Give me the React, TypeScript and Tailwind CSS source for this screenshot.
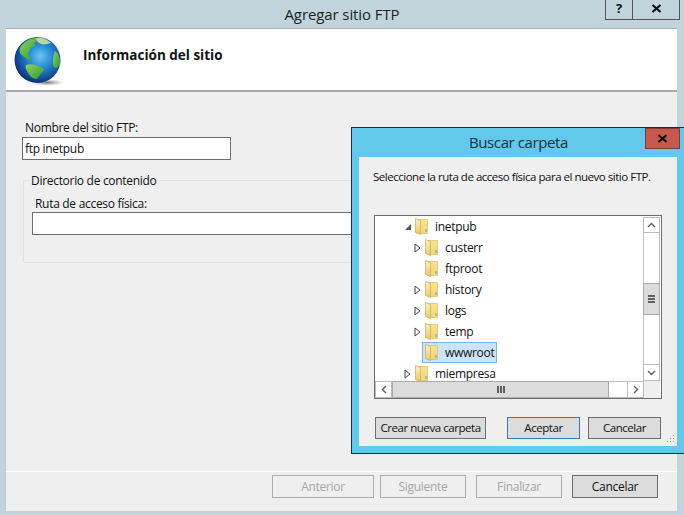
import React from 'react'

const font = "[font-family:'Open_Sans','Noto_Sans',sans-serif]"

function Globe() {
  return (
    <svg width="50" height="52" viewBox="0 0 50 52" className="shrink-0">
      <defs>
        <radialGradient id="sea" cx="0.56" cy="0.42" r="0.6">
          <stop offset="0" stopColor="#6cc8f0" />
          <stop offset="0.4" stopColor="#2a8ed6" />
          <stop offset="0.78" stopColor="#15529f" />
          <stop offset="1" stopColor="#0e2c6c" />
        </radialGradient>
        <radialGradient id="shade" cx="0.5" cy="0.5" r="0.5">
          <stop offset="0" stopColor="#444" stopOpacity="0.75" />
          <stop offset="1" stopColor="#888" stopOpacity="0" />
        </radialGradient>
        <linearGradient id="land" x1="0" y1="0" x2="1" y2="1">
          <stop offset="0" stopColor="#8fd060" />
          <stop offset="1" stopColor="#2f9a36" />
        </linearGradient>
      </defs>
      <ellipse cx="33" cy="46.5" rx="17" ry="3.5" fill="url(#shade)" />
      <circle cx="23.5" cy="24" r="23" fill="url(#sea)" />
      <path d="M7 10 C11 5 17 2 22 2 C25 4 23 6 20 7 C22 9 20 11 18 11 C15 12 17 15 14 17 C13 20 17 21 18 25 C14 24 10 21 8 19 C5 17 5 13 7 10Z" fill="url(#land)" />
      <path d="M22 2 C28 1 33 3 37 7 C33 8 30 9 27 8 C25 7 22 5 22 2Z" fill="#b5d8a0" />
      <path d="M12 29 C17 27 24 29 30 33 C29 37 25 39 23 43 C18 43 15 39 13 35 C12 33 11 31 12 29Z" fill="url(#land)" />
      <path d="M41 15 C45 18 47 23 46 29 C44 31 42 33 40 31 C38 27 39 20 41 15Z" fill="url(#land)" />
    </svg>
  )
}

function Folder() {
  return (
    <svg width="13" height="17" viewBox="0 0 13 17" className="shrink-0">
      <defs>
        <linearGradient id="leaf" x1="0" y1="0" x2="0" y2="1">
          <stop offset="0" stopColor="#fcf2c4" />
          <stop offset="1" stopColor="#e9c766" />
        </linearGradient>
        <linearGradient id="panel" x1="0" y1="0" x2="0" y2="1">
          <stop offset="0" stopColor="#f8e390" />
          <stop offset="1" stopColor="#f2d578" />
        </linearGradient>
      </defs>
      <path d="M3 1.5 H12.5 V15.5 H3Z" fill="url(#panel)" stroke="#d8bb66" strokeWidth="0.7" />
      <path d="M0.5 0.5 L5.5 2.5 L5.5 16.5 L0.5 14.5Z" fill="url(#leaf)" stroke="#c9a850" strokeWidth="0.7" />
      <rect x="10.5" y="11" width="1" height="3" fill="#4aa3df" />
    </svg>
  )
}

function TreeRow({ label, indent, arrow, selected }: { label: string; indent: string; arrow?: 'open' | 'closed'; selected?: boolean }) {
  return (
    <div className={`flex h-[21px] items-center ${indent}`}>
      <div className="flex w-[8px] justify-start">
        {arrow === 'open' && (
          <svg width="8" height="8" viewBox="0 0 8 8" className="shrink-0"><path d="M7 1 L7 7 L1 7Z" fill="#555" /></svg>
        )}
        {arrow === 'closed' && (
          <svg width="7" height="10" viewBox="0 0 7 10" className="shrink-0"><path d="M1 1 L6 5 L1 9Z" fill="#fff" stroke="#444" /></svg>
        )}
      </div>
      <div className={`flex h-[21px] items-center gap-[7px] border pr-[2px] pl-[2px] ${selected ? 'border-[#7db4e4] bg-[#cce4f8]' : 'border-transparent'}`}>
        <Folder />
        <span className="text-[12px] text-[#111]">{label}</span>
      </div>
    </div>
  )
}

function DlgButton({ children, className }: { children: React.ReactNode; className: string }) {
  return (
    <div className={`flex h-[22px] items-center justify-center whitespace-nowrap border bg-[#dcdcdc] text-[11.5px] tracking-[-0.45px] text-[#111] ${className}`}>
      {children}
    </div>
  )
}

function WizardButton({ children, className }: { children: React.ReactNode; className: string }) {
  return (
    <div className={`flex h-[23px] items-center justify-center border text-[12px] ${className}`}>
      {children}
    </div>
  )
}

function BrowseDialog() {
  return (
    <div className="absolute left-[351px] top-[127px] flex h-[327px] w-[340px] flex-col border border-[#1e2c38] bg-[#63c8eb]">
      <div className="relative h-[29px] w-[333px] shrink-0">
        <div className="flex h-[29px] items-center justify-center text-[15px] tracking-[-0.4px] text-[#14313f]">Buscar carpeta</div>
        <div className="absolute left-[293px] top-0 flex h-[21px] w-[35px] items-center justify-center border border-[#7c3a38] bg-[#c75a50]">
          <svg width="11" height="9" viewBox="0 0 11 9"><path d="M1.5 1 L9.5 8 M9.5 1 L1.5 8" stroke="#111" strokeWidth="2.2" /></svg>
        </div>
      </div>
      <div className="relative ml-[7px] flex h-[289px] w-[318px] flex-col bg-[#efefef] pl-[15px]">
        <p className="-ml-px mt-[11px] h-[17px] whitespace-nowrap text-[11.5px] leading-[17px] tracking-[-0.48px] text-[#111]">Seleccione la ruta de acceso física para el nuevo sitio FTP.</p>
        <div className="mt-[30px] flex h-[184px] w-[288px] flex-col border border-[#6e6e6e] bg-white">
          <div className="flex min-h-0 flex-1">
            <div className="flex-1 overflow-hidden">
              <TreeRow label="inetpub" indent="pl-[29px]" arrow="open" />
              <TreeRow label="custerr" indent="pl-[39px]" arrow="closed" />
              <TreeRow label="ftproot" indent="pl-[39px]" />
              <TreeRow label="history" indent="pl-[39px]" arrow="closed" />
              <TreeRow label="logs" indent="pl-[39px]" arrow="closed" />
              <TreeRow label="temp" indent="pl-[39px]" arrow="closed" />
              <TreeRow label="wwwroot" indent="pl-[39px]" selected />
              <TreeRow label="miempresa" indent="pl-[29px]" arrow="closed" />
            </div>
            <div className="flex w-[18px] flex-col pt-[1px] pr-[1px]">
              <div className="flex h-[16px] items-center justify-center border border-[#bcbcbc] bg-white">
                <svg width="9" height="6" viewBox="0 0 9 6"><path d="M1 5 L4.5 1.5 L8 5" fill="none" stroke="#606060" strokeWidth="1.4" /></svg>
              </div>
              <div className="h-[50px] border-x border-[#bcbcbc]" />
              <div className="flex h-[32px] flex-col items-center justify-center gap-[1px] border border-[#ababab] bg-[#dcdcdc]">
                <div className="h-[2px] w-[7px] bg-[#606060]" />
                <div className="h-[2px] w-[7px] bg-[#606060]" />
                <div className="h-[2px] w-[7px] bg-[#606060]" />
              </div>
              <div className="flex-1 border-x border-[#bcbcbc]" />
              <div className="flex h-[17px] items-center justify-center border border-[#bcbcbc] bg-white">
                <svg width="9" height="6" viewBox="0 0 9 6"><path d="M1 1 L4.5 4.5 L8 1" fill="none" stroke="#606060" strokeWidth="1.4" /></svg>
              </div>
            </div>
          </div>
          <div className="flex h-[17px] shrink-0 pr-[1px]">
            <div className="flex w-[17px] items-center justify-center border border-[#bcbcbc] bg-white">
              <svg width="6" height="9" viewBox="0 0 6 9"><path d="M5 1 L1.5 4.5 L5 8" fill="none" stroke="#606060" strokeWidth="1.4" /></svg>
            </div>
            <div className="flex w-[217px] items-center justify-center gap-[1px] border border-[#ababab] bg-[#dcdcdc]">
              <div className="h-[7px] w-[2px] bg-[#606060]" />
              <div className="h-[7px] w-[2px] bg-[#606060]" />
              <div className="h-[7px] w-[2px] bg-[#606060]" />
            </div>
            <div className="w-[18px] border-y border-[#bcbcbc]" />
            <div className="flex w-[17px] items-center justify-center border border-[#bcbcbc] bg-white">
              <svg width="6" height="9" viewBox="0 0 6 9"><path d="M1 1 L4.5 4.5 L1 8" fill="none" stroke="#606060" strokeWidth="1.4" /></svg>
            </div>
            <div className="flex-1 bg-[#efefef]" />
          </div>
        </div>
        <div className="mt-[18px] ml-[1px] flex items-center">
          <DlgButton className="w-[111px] border-[#6e6e6e]">Crear nueva carpeta</DlgButton>
          <DlgButton className="ml-[21px] w-[73px] border-[#3f78a8]">Aceptar</DlgButton>
          <DlgButton className="ml-[8px] w-[73px] border-[#6e6e6e]">Cancelar</DlgButton>
        </div>
        <svg width="10" height="10" viewBox="0 0 10 10" className="absolute bottom-[2px] right-[2px]">
          <path d="M8 1h1v1H8z M5 4h1v1H5z M8 4h1v1H8z M2 7h1v1H2z M5 7h1v1H5z M8 7h1v1H8z" fill="#9a9a9a" />
        </svg>
      </div>
    </div>
  )
}

export default function App() {
  return (
    <div className={`relative flex h-[515px] w-[684px] flex-col overflow-hidden bg-[#c1d4db] tracking-[-0.3px] ${font}`}>
      {/* Title bar */}
      <div className="relative h-[28px] shrink-0">
        <div className="flex h-[28px] items-center justify-center text-[15px] tracking-[-0.1px] text-[#222]">Agregar sitio FTP</div>
        <div className="absolute left-[605px] top-0 flex h-[20px] w-[75px] border-x border-b border-[#555]">
          <div className="flex w-[27px] items-center justify-center border-r border-[#555] pb-[2px] text-[13px] leading-none font-bold text-[#111]">?</div>
          <div className="flex flex-1 items-center justify-center pb-[2px]">
            <svg width="11" height="9" viewBox="0 0 11 9"><path d="M1.5 1 L9.5 8 M9.5 1 L1.5 8" stroke="#111" strokeWidth="2.2" /></svg>
          </div>
        </div>
      </div>

      {/* Wizard body */}
      <div className="ml-[6px] flex h-[483px] w-[671px] flex-col border-t border-[#aab0b4] bg-[#efefef]">
        <div className="flex h-[63px] shrink-0 items-center border-b-2 border-[#a8a8a8] bg-white pl-[8px]">
          <div className="mt-[4px]"><Globe /></div>
          <h1 className="ml-[19px] mb-[9px] text-[13.5px] font-bold tracking-normal text-[#111]">Información del sitio</h1>
        </div>

        <div className="flex-1 pl-[16px] pt-[27px]">
          <label className="ml-[3px] block h-[18px] text-[12px] leading-[18px] text-[#111]">Nombre del sitio FTP:</label>
          <div className="flex h-[23px] w-[209px] items-center border border-[#6e6e6e] bg-white pl-[2px] text-[12px] text-[#111]">ftp inetpub</div>

          <div className="relative mt-[20px] ml-[1px] h-[83px] w-[640px] rounded-[2px] border border-[#dbe3e9] pl-[8px] pt-[14px]">
            <span className="absolute left-[6px] top-[-9px] bg-[#efefef] px-[1px] text-[12px] leading-[17px] text-[#111]">Directorio de contenido</span>
            <label className="ml-[3px] block h-[17px] text-[12px] leading-[17px] text-[#111]">Ruta de acceso física:</label>
            <div className="h-[23px] w-[600px] border border-[#6e6e6e] bg-white" />
          </div>
        </div>

        <div className="flex h-[40px] shrink-0 border-t border-white pl-[266px] pt-[3px]">
          <WizardButton className="w-[102px] border-[#adadad] text-[#a6a6a6]">Anterior</WizardButton>
          <WizardButton className="ml-[6px] w-[86px] border-[#adadad] text-[#a6a6a6]">Siguiente</WizardButton>
          <WizardButton className="ml-[10px] w-[86px] border-[#adadad] text-[#a6a6a6]">Finalizar</WizardButton>
          <WizardButton className="ml-[10px] w-[86px] border-[#6e6e6e] bg-[#dcdcdc] text-[#111]">Cancelar</WizardButton>
        </div>
      </div>

      <BrowseDialog />
    </div>
  )
}
